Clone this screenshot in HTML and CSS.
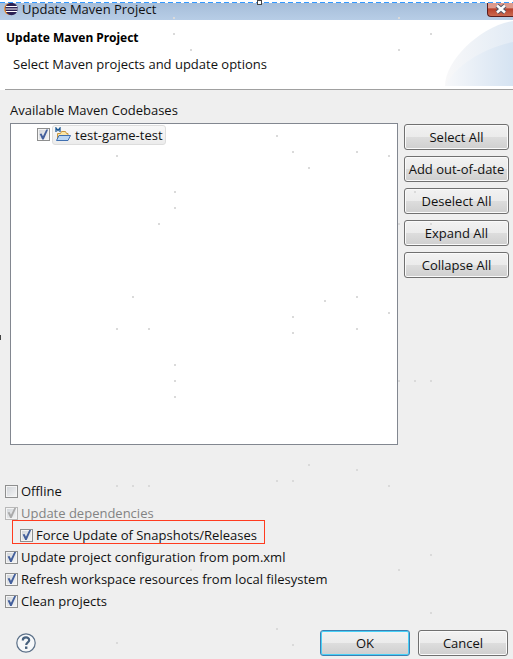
FILE: index.html
```
<!DOCTYPE html>
<html lang="en">
<head>
<meta charset="UTF-8">
<meta name="viewport" content="width=device-width, initial-scale=1.0">
<title>Update Maven Project</title>
<link rel="stylesheet" href="styles.css">
</head>
<body>
<main class="dialog">
<div class="titlebar">
<svg class="logo" width="14" height="14" viewBox="0 0 14 14">
<circle cx="6" cy="7" r="6" fill="#f0902e"/>
<circle cx="7.5" cy="7" r="6.2" fill="#2c2255"/>
<path d="M2 4.500h11M1.500 7h12M2 9.500h11" stroke="#fff" stroke-width="1.200"/>
</svg>
<span class="title">Update Maven Project</span>
<button class="close" type="button" aria-label="Close">
<svg width="12" height="10" viewBox="0 0 12 10">
<path d="M2 1.500l8 7M10 1.500l-8 7" stroke="#535666" stroke-width="4.500"/>
<path d="M2 1.500l8 7M10 1.500l-8 7" stroke="#fff" stroke-width="2.500"/>
</svg>
</button>
<div class="selection"></div>
<span class="handle"></span>
</div>

<header class="header">
<h1>Update Maven Project</h1>
<p>Select Maven projects and update options</p>
<svg class="banner" width="68" height="66" viewBox="0 0 68 66">
<defs>
<linearGradient id="arc" x1="0" x2="1" y1="0" y2="0">
<stop offset="0" stop-color="#f8f8f9"/>
<stop offset="1" stop-color="#e2ebf5"/>
</linearGradient>
<linearGradient id="arc2" x1="0" x2="1" y1="0" y2="0">
<stop offset="0" stop-color="#f7f8fa"/>
<stop offset="1" stop-color="#d5e3f2"/>
</linearGradient>
</defs>
<path d="M0 66C0 40 36 6 68 1V66Z" fill="url(#arc)"/>
<path d="M0 66C10 46 38 28 68 22V66Z" fill="url(#arc2)"/>
</svg>
</header>

<section class="content">
<h2 id="codebases">Available Maven Codebases</h2>
<div class="chooser">
<div class="tree" role="group" aria-labelledby="codebases">
<label class="node">
<input type="checkbox" checked>
<span class="item">
<svg width="16" height="16" viewBox="0 0 16 16">
<path d="M2.500 14V6.500h3l1-2h4l1 2h1.500V9" fill="#fbe6a6" stroke="#c9963f"/>
<path d="M1.500 13.500L4 8.500h11.500l-2.500 5z" fill="#b9d6f5" stroke="#3f6fb0"/>
<path d="M1 5V1l2 2.500L5 1v4" fill="none" stroke="#1f5a94" stroke-width="1.300"/>
</svg>
test-game-test
</span>
</label>
</div>
<div class="actions">
<button type="button">Select All</button>
<button type="button">Add out-of-date</button>
<button type="button">Deselect All</button>
<button type="button">Expand All</button>
<button type="button">Collapse All</button>
</div>
</div>
</section>

<section class="options">
<label><input type="checkbox">Offline</label>
<label class="disabled"><input type="checkbox" checked disabled>Update dependencies</label>
<label class="nested"><input type="checkbox" checked>Force Update of Snapshots/Releases<span class="mark"></span></label>
<label><input type="checkbox" checked>Update project configuration from pom.xml</label>
<label><input type="checkbox" checked>Refresh workspace resources from local filesystem</label>
<label><input type="checkbox" checked>Clean projects</label>
</section>

<footer class="footer">
<button class="help" type="button" aria-label="Help">
<svg width="20" height="20" viewBox="0 0 20 20">
<circle cx="10" cy="10" r="9.200" fill="#f6f8fa" stroke="#5b7088" stroke-width="1.200"/>
<path d="M6.800 7.500C6.800 3.500 13.200 3.500 13.200 7.200C13.200 9.500 10.200 9.300 10.200 12" fill="none" stroke="#47617e" stroke-width="2.200"/>
<rect x="9" y="13.500" width="2.400" height="2.400" fill="#47617e"/>
</svg>
</button>
<button class="ok" type="button">OK</button>
<button type="button">Cancel</button>
</footer>

<span class="edge-handle"></span>
<!-- faint grid specks over the whole window -->
<svg class="specks" width="513" height="659" viewBox="0 0 513 659" aria-hidden="true">
<path d="M173 18h2M173 34h2M190 50h2M398 18h2M430 34h2M398 50h2M276 136h2M292 152h2M356 152h2M388 156h2M308 168h2M116 156h2M174 192h2M174 208h2M158 224h2M414 192h2M398 224h2M430 224h2M132 297h2M116 329h2M148 329h2M292 317h2M292 333h2M324 301h2M356 297h2M388 313h2M356 329h2M174 365h2M174 381h2M174 397h2M398 381h2M414 381h2M430 381h2M308 465h2M276 481h2M292 481h2M356 470h2M116 486h2M132 486h2M148 486h2M388 486h2M190 570h2M430 555h2M398 570h2M276 629h2M292 645h2M116 643h2M430 613h2" stroke="#dadada" stroke-width="2"/>
</svg>
</main>
</body>
</html>
```
FILE: styles.css
```
* {
box-sizing: border-box;
}
body {
margin: 0;
background: #efefef;
color: #111;
font-family: "Open Sans", sans-serif;
font-size: 13px;
line-height: 16px;
}
h1, h2, p {
margin: 0;
font-size: 13px;
}
h1 {
font-family: "Noto Sans", sans-serif;
font-size: 12px;
color: #000;
}
.dialog {
position: relative;
display: flex;
flex-direction: column;
min-height: 100vh;
overflow: hidden;
}
.titlebar {
position: relative;
display: flex;
align-items: center;
height: 20px;
padding: 0 0 2px 4px;
background: linear-gradient(#a3bbd7, #b7cde6);
}
.title {
flex: 1;
margin-left: 4px;
}
.close {
display: flex;
align-items: center;
justify-content: center;
width: 26px;
height: 16px;
padding: 0;
border: 1px solid #5a1d1d;
border-right: 0;
border-radius: 0 0 0 4px;
background: linear-gradient(#dd9a8c 40%, #b8412c 50%, #cc6a50);
}
.selection {
position: absolute;
top: 0;
left: 0;
right: 0;
height: 3px;
background: repeating-linear-gradient(90deg, #3399ff 0 5px, #fff 5px 8px) 0 2px / 100% 1px no-repeat #fff;
}
.handle {
position: absolute;
top: 0;
left: 50%;
width: 5px;
height: 5px;
border: 1px solid #444;
background: #fff;
}
.edge-handle {
position: absolute;
top: 335px;
left: 0;
width: 1px;
height: 5px;
background: #444;
}
.specks {
position: absolute;
top: 0;
left: 0;
pointer-events: none;
}
.header {
position: relative;
height: 70px;
padding: 10px 6px;
background: linear-gradient(#a0a0a0, #a0a0a0) 5px 69px / 100% 1px no-repeat #fff;
}
.header p {
margin: 10px 0 0 7px;
}
.banner {
position: absolute;
right: 0;
top: 0;
}
.content {
padding: 12px 4px 0 10px;
}
.content h2 {
margin-bottom: 5px;
font-weight: normal;
}
.chooser {
display: grid;
grid-template-columns: 1fr 105px;
gap: 6px;
}
.tree {
height: 322px;
border: 1px solid #828790;
background: #fff;
}
.node {
display: flex;
align-items: center;
margin-left: 26px;
}
.item {
display: flex;
align-items: center;
gap: 4px;
height: 20px;
margin: 1px 0 0 2px;
padding: 0 2px;
border: 1px solid #ddd;
border-radius: 3px;
background: linear-gradient(#f8f8f8, #ececec);
}
.actions {
display: flex;
flex-direction: column;
gap: 6px;
padding-top: 1px;
}
.actions button, .footer button {
height: 26px;
padding: 0;
border: 1px solid #707070;
border-radius: 3px;
background: linear-gradient(#f2f2f2, #ebebeb 50%, #dddddd 50%, #cfcfcf);
box-shadow: inset 0 0 0 1px #fafafa;
color: #111;
font: inherit;
}
input {
appearance: none;
flex: none;
width: 13px;
height: 13px;
margin: 0;
border: 1px solid #8e8f8f;
background: linear-gradient(135deg, #cfd3d8, #f6f6f6);
box-shadow: inset 0 0 0 1px #f4f4f4;
}
input:checked::before {
content: "";
display: block;
width: 11px;
height: 11px;
background: #435f9c;
clip-path: polygon(15% 45%, 32% 40%, 45% 65%, 75% 5%, 92% 5%, 52% 95%, 38% 95%);
}
.options {
display: flex;
flex-direction: column;
padding: 35px 5px 0;
}
.options label {
position: relative;
display: flex;
align-items: center;
align-self: flex-start;
gap: 3px;
height: 22px;
}
.options .disabled {
color: #838383;
}
input:disabled {
border-color: #b8b8b8;
}
input:disabled::before {
background: #aaa;
}
.options .nested {
margin-left: 15px;
}
.mark {
position: absolute;
top: -4px;
left: -8px;
right: -8px;
height: 24px;
border: 1px solid #ff3b1f;
}
.footer {
display: flex;
align-items: center;
gap: 8px;
margin-top: auto;
padding: 0 5px 3px 16px;
}
.footer button {
width: 90px;
}
.footer .ok {
border-color: #3c7fb1;
box-shadow: inset 0 0 0 1px #48d0f7;
}
.footer .help {
width: 20px;
height: 20px;
margin-right: auto;
border: 0;
background: none;
box-shadow: none;
}
.help svg {
display: block;
}
```
